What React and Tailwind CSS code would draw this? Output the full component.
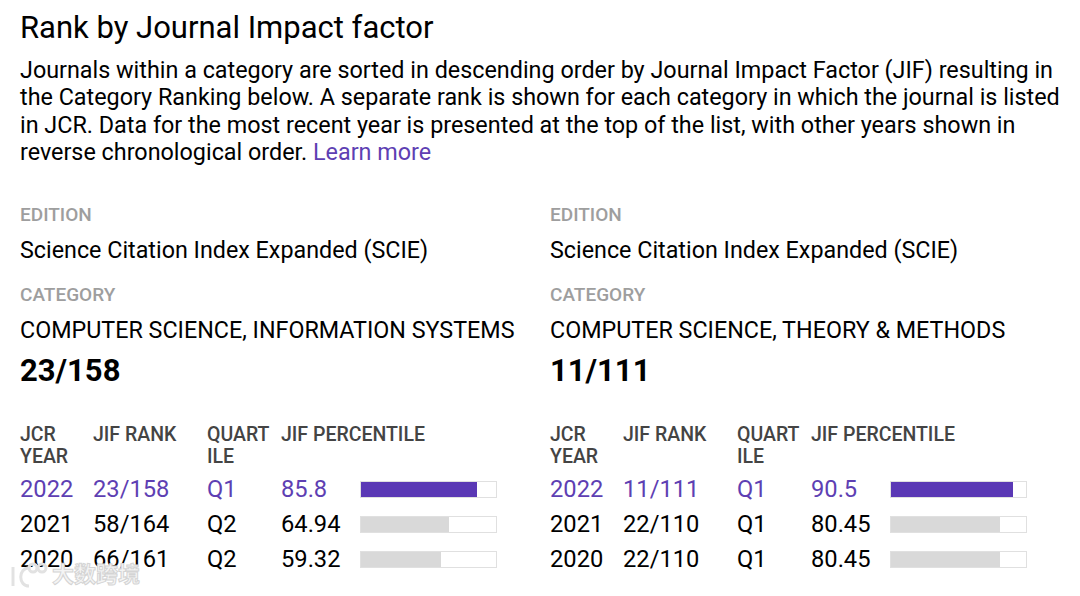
import React from "react";

const Columns = [
  {
    Edition: "Science Citation Index Expanded (SCIE)",
    Category: "COMPUTER SCIENCE, INFORMATION SYSTEMS",
    Rank: "23/158",
    Rows: [
      { Year: "2022", Rank: "23/158", Quartile: "Q1", Percentile: "85.8", Value: 85.8 },
      { Year: "2021", Rank: "58/164", Quartile: "Q2", Percentile: "64.94", Value: 64.94 },
      { Year: "2020", Rank: "66/161", Quartile: "Q2", Percentile: "59.32", Value: 59.32 },
    ],
  },
  {
    Edition: "Science Citation Index Expanded (SCIE)",
    Category: "COMPUTER SCIENCE, THEORY & METHODS",
    Rank: "11/111",
    Rows: [
      { Year: "2022", Rank: "11/111", Quartile: "Q1", Percentile: "90.5", Value: 90.5 },
      { Year: "2021", Rank: "22/110", Quartile: "Q1", Percentile: "80.45", Value: 80.45 },
      { Year: "2020", Rank: "22/110", Quartile: "Q1", Percentile: "80.45", Value: 80.45 },
    ],
  },
];

const RankColumn = ({ col }) => {
  return (
    <div className="w-[530px] shrink-0">
      <div className="text-[19px] leading-[22px] font-medium text-[#9e9e9e] mt-[3px]">EDITION</div>
      <div className="text-[23.3px] leading-[27px] mt-[11px] whitespace-nowrap">{col.Edition}</div>
      <div className="text-[19px] leading-[22px] font-medium text-[#9e9e9e] mt-[20px]">CATEGORY</div>
      <div className="text-[23.3px] leading-[27px] mt-[11px] whitespace-nowrap">{col.Category}</div>
      <div className="text-[31px] leading-[34px] font-bold mt-[10px]">{col.Rank}</div>

      {/* table header */}
      <div className="flex text-[19.5px] leading-[22px] font-medium text-[#444444] mt-[36px] whitespace-nowrap">
        <div className="w-[73px]">JCR<br />YEAR</div>
        <div className="w-[114px]">JIF RANK</div>
        <div className="w-[74px]">QUART<br />ILE</div>
        <div>JIF PERCENTILE</div>
      </div>

      <div className="mt-[4px]">
        {col.Rows.map((row, i) => (
          <div
            key={i}
            className={`flex items-center h-[35px] text-[23.7px] whitespace-nowrap ${i === 0 ? "text-[#5e3fb3]" : "text-black"}`}
          >
            <div className="w-[73px]">{row.Year}</div>
            <div className="w-[114px]">{row.Rank}</div>
            <div className="w-[74px]">{row.Quartile}</div>
            <div className="w-[79px]">{row.Percentile}</div>
            <div className="w-[137px] h-[17px] border border-[#e0e0e0] bg-white">
              <div
                className={`h-full ${i === 0 ? "bg-[#5a38b5]" : "bg-[#d9d9d9]"}`}
                style={{ width: `${row.Value}%` }}
              ></div>
            </div>
          </div>
        ))}
      </div>
    </div>
  );
};

const App = () => {
  return (
    <div
      className="relative w-[1080px] h-[596px] overflow-hidden bg-white text-black pl-[20px]"
      style={{ fontFamily: "Roboto, 'Noto Sans CJK SC', sans-serif" }}
    >
      <h1 className="text-[31px] leading-[36px] pt-[10px]">Rank by Journal Impact factor</h1>
      <p className="text-[23.35px] leading-[27.3px] mt-[11px] whitespace-nowrap">
        Journals within a category are sorted in descending order by Journal Impact Factor (JIF) resulting in
        <br />
        the Category Ranking below. A separate rank is shown for each category in which the journal is listed
        <br />
        in JCR. Data for the most recent year is presented at the top of the list, with other years shown in
        <br />
        reverse chronological order. <span className="text-[#5e3fb3]">Learn more</span>
      </p>

      <div className="flex mt-[35px]">
        {Columns.map((col, i) => (
          <RankColumn col={col} key={i} />
        ))}
      </div>

      {/* watermark */}
      <div className="absolute left-[8px] top-[561px] flex items-center gap-[2px]">
        <svg width="42" height="28" viewBox="0 0 42 28" fill="none" stroke="#e2e2e2" strokeWidth="3">
          <path d="M5 6 L5 25" />
          <path d="M21 7 C10 7 10 25 21 25" />
          <circle cx="25" cy="7" r="4" />
          <circle cx="34" cy="7" r="4" />
        </svg>
        <span
          className="text-[22px] leading-[28px] font-bold text-[#f4f4f4]"
          style={{ WebkitTextStroke: "1px #d4d4d4" }}
        >
          大数跨境
        </span>
      </div>
    </div>
  );
};

export default App;
